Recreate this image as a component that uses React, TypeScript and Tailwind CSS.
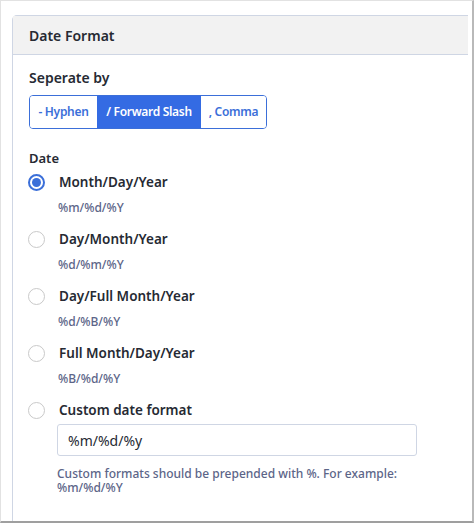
import { useState } from "react";

const separators = [
  { key: "-", label: "- Hyphen", width: "w-[67px]" },
  { key: "/", label: "/ Forward Slash", width: "w-[104px]" },
  { key: ",", label: ", Comma", width: "w-[65px]" },
];

const formats = [
  { label: "Month/Day/Year", code: "%m/%d/%Y" },
  { label: "Day/Month/Year", code: "%d/%m/%Y" },
  { label: "Day/Full Month/Year", code: "%d/%B/%Y" },
  { label: "Full Month/Day/Year", code: "%B/%d/%Y" },
];

function Radio({ checked }: { checked: boolean }) {
  return checked ? (
    <span className="flex h-[17px] w-[17px] items-center justify-center rounded-full border-2 border-[#3b6fd9] bg-white">
      <span className="h-[9px] w-[9px] rounded-full bg-[#3b6fd9]" />
    </span>
  ) : (
    <span className="h-[17px] w-[17px] rounded-full border border-[#c9c9c9] bg-white" />
  );
}

export default function App() {
  const [sep, setSep] = useState("/");
  const [selected, setSelected] = useState(0);
  const [custom, setCustom] = useState("%m/%d/%y");

  return (
    <div className="h-[527px] w-[475px] bg-white font-['Noto_Sans',sans-serif] text-[#262a33]">
      {/* window frame */}
      <div className="h-[523px] w-[474px] overflow-hidden border-t border-l border-[#e2e2e2] border-r-2 border-b-2 border-r-[#b9b9b9] border-b-[#9f9f9f] pl-[11px] pt-[14px]">
        <div className="w-[456px] overflow-hidden">
          <div className="w-[520px] rounded-tl-[5px] border-l border-t border-[#cfd6e4]">
            <div className="flex h-[39px] items-center border-b border-[#cfd6e4] bg-[#f2f2f2] pl-[16px]">
              <h2 className="text-[14px] font-semibold">Date Format</h2>
            </div>

            <div className="pl-[16px] pt-[13px] pb-[40px]">
              <div className="text-[14px] font-semibold leading-[20px]">Seperate by</div>
              <div className="mt-[7px] flex h-[34px] w-fit overflow-hidden rounded-[4px] border border-[#3b6fd9]">
                {separators.map((s) => (
                  <button
                    key={s.key}
                    onClick={() => setSep(s.key)}
                    className={`${s.width} whitespace-nowrap text-center text-[12px] font-semibold tracking-[-0.3px] ${
                      sep === s.key ? "bg-[#346be3] text-white" : "bg-white text-[#3b6fd9]"
                    }`}
                  >
                    {s.label}
                  </button>
                ))}
              </div>

              <div className="mt-[20px] text-[13px] font-semibold leading-[18px]">Date</div>

              <div className="mt-[3px] flex flex-col">
                {formats.map((f, i) => (
                  <div key={f.code} className="h-[57px]" onClick={() => setSelected(i)}>
                    <div className="flex h-[24px] items-center">
                      <span className="ml-[-1px] flex w-[31px] items-center">
                        <Radio checked={selected === i} />
                      </span>
                      <span className="text-[13.5px] font-semibold">{f.label}</span>
                    </div>
                    <div className="mt-[5px] pl-[29px] text-[12px] font-medium leading-[18px] text-[#5c6588]">{f.code}</div>
                  </div>
                ))}

                <div onClick={() => setSelected(4)}>
                  <div className="flex h-[24px] items-center">
                    <span className="ml-[-1px] flex w-[31px] items-center">
                      <Radio checked={selected === 4} />
                    </span>
                    <span className="text-[13.5px] font-semibold">Custom date format</span>
                  </div>
                  <div className="pl-[28px]">
                    <input
                      value={custom}
                      onChange={(e) => setCustom(e.target.value)}
                      className="mt-[2px] h-[32px] w-[360px] rounded-[3px] border border-[#cfd6e4] px-[10px] text-[14px] text-[#262a33] outline-none"
                    />
                    <p className="mt-[11px] w-[345px] text-[12px] font-medium leading-[14px] text-[#5c6588]">
                      Custom formats should be prepended with %. For example: %m/%d/%Y
                    </p>
                  </div>
                </div>
              </div>
            </div>
          </div>
        </div>
      </div>
    </div>
  );
}
